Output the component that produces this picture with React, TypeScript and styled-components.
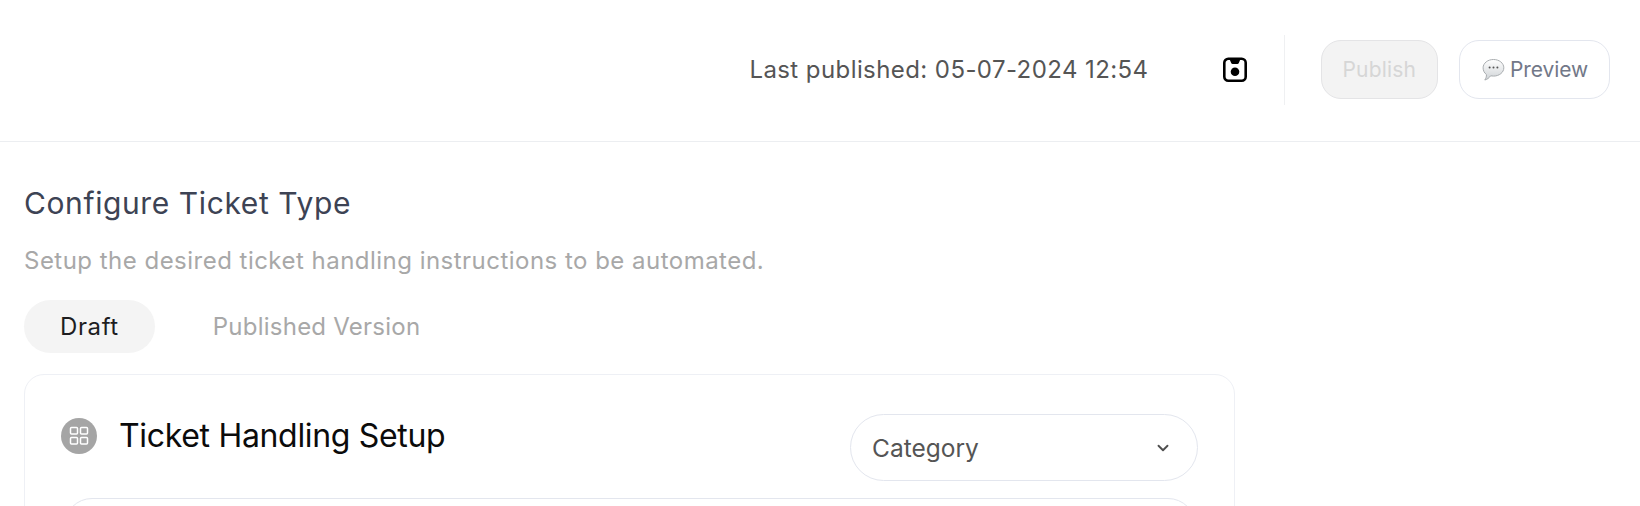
import styled, { createGlobalStyle } from "styled-components";
import { ChevronDown } from "lucide-react";

const GlobalStyle = createGlobalStyle`
  html, body {
    margin: 0;
    height: 506px;
    overflow: hidden;
    background: #ffffff;
    font-family: "Inter", "Noto Sans", sans-serif;
  }
  * {
    box-sizing: border-box;
  }
`;

const SaveIcon = () => (
  <svg width="26" height="26" viewBox="0 0 26 26" fill="none">
    <rect x="2.3" y="1.8" width="21.4" height="22" rx="4" stroke="#000" strokeWidth="2.6" />
    <path d="M7.5 2h11l-1.8 4.2a1.5 1.5 0 0 1-1.4.8h-4.6a1.5 1.5 0 0 1-1.4-.8z" fill="#000" />
    <circle cx="13" cy="14.8" r="4.3" fill="#000" />
  </svg>
);

const BubbleIcon = () => (
  <svg width="24" height="24" viewBox="0 0 24 24">
    <defs>
      <linearGradient id="bubble" x1="0" y1="0" x2="0" y2="1">
        <stop offset="0" stopColor="#ffffff" />
        <stop offset="1" stopColor="#cfd3d6" />
      </linearGradient>
    </defs>
    <path
      d="M12.5 1.5c5.8 0 10.3 3.7 10.3 8.3s-4.5 8.3-10.3 8.3c-1 0-2-.1-2.9-.3-1.3 1.9-3.3 3.7-5.8 4.2 1.1-1.6 1.7-3.3 1.7-5.4-2.2-1.6-3.4-4-3.4-6.8 0-4.6 4.6-8.3 10.4-8.3z"
      fill="url(#bubble)"
      stroke="#a9adb0"
      strokeWidth="1"
    />
    <circle cx="8.6" cy="9.6" r="1" fill="#555" />
    <circle cx="12.5" cy="9.6" r="1" fill="#555" />
    <circle cx="16.4" cy="9.6" r="1" fill="#555" />
  </svg>
);

const GridIcon = () => (
  <svg width="20" height="20" viewBox="0 0 20 20" fill="none" stroke="#fff" strokeWidth="1.5">
    <rect x="1.5" y="1.5" width="7" height="6.5" rx="1" />
    <rect x="11.5" y="1.5" width="7" height="6.5" rx="1" />
    <rect x="1.5" y="11.5" width="7" height="6.5" rx="1" />
    <rect x="11.5" y="11.5" width="7" height="6.5" rx="1" />
  </svg>
);

const Header = styled.header`
  height: 142px;
  display: flex;
  align-items: center;
  justify-content: flex-end;
  padding: 0 30px 2px 0;
  border-bottom: 1px solid #eceef1;
`;

const LastPublished = styled.span`
  font-size: 24px;
  color: #555555;
  margin-right: 73px;
  letter-spacing: 0.42px;
`;

const SaveButton = styled.span`
  display: flex;
  margin-right: 36px;
`;

const Divider = styled.div`
  width: 1px;
  height: 70px;
  background: #eff0f2;
  margin-right: 36px;
`;

const HeaderButton = styled.button<{ $disabled?: boolean }>`
  height: 59px;
  display: flex;
  align-items: center;
  gap: 5px;
  padding: 0 21px;
  border-radius: 20px;
  font-family: inherit;
  font-size: 21px;
  background: ${(p) => (p.$disabled ? "#f3f3f3" : "#ffffff")};
  color: ${(p) => (p.$disabled ? "#d6d6d6" : "#727888")};
  border: 1px solid ${(p) => (p.$disabled ? "#e4e4e6" : "#e3e6ee")};
  margin-left: ${(p) => (p.$disabled ? "0" : "21px")};
  letter-spacing: ${(p) => (p.$disabled ? "0.15px" : "-0.1px")};
`;

const Main = styled.main`
  padding: 0 24px;
`;

const Title = styled.h1`
  margin: 42px 0 0;
  font-size: 30px;
  line-height: 38px;
  font-weight: 400;
  color: #3d4354;
  letter-spacing: 0.6px;
`;

const Subtitle = styled.p`
  margin: 23px 0 0;
  font-size: 24px;
  line-height: 32px;
  color: #a8a8a8;
  letter-spacing: 0.48px;
`;

const Tabs = styled.div`
  display: flex;
  align-items: center;
  margin-top: 23px;
`;

const Tab = styled.div<{ $active?: boolean }>`
  height: 53px;
  display: flex;
  align-items: center;
  padding: 0 36px;
  border-radius: 27px;
  font-size: 24px;
  background: ${(p) => (p.$active ? "#f4f4f4" : "transparent")};
  color: ${(p) => (p.$active ? "#1d1d1f" : "#a8a8a8")};
  margin-left: ${(p) => (p.$active ? "0" : "22px")};
  letter-spacing: ${(p) => (p.$active ? "0.6px" : "0.24px")};
`;

const Card = styled.section`
  width: 1211px;
  height: 200px;
  margin-top: 21px;
  padding: 39px 36px 0;
  border: 1px solid #eef0f5;
  border-radius: 20px;
`;

const CardHeader = styled.div`
  display: flex;
  justify-content: space-between;
  align-items: flex-start;
`;

const CardTitleRow = styled.div`
  display: flex;
  align-items: center;
  gap: 22px;
  margin-top: 4px;
`;

const IconCircle = styled.span`
  width: 36px;
  height: 36px;
  border-radius: 50%;
  background: #a5a5a5;
  display: flex;
  align-items: center;
  justify-content: center;
`;

const CardTitle = styled.h2`
  margin: 0;
  font-size: 32px;
  line-height: 36px;
  font-weight: 400;
  color: #0b0b0b;
  letter-spacing: -0.32px;
`;

const Select = styled.div`
  width: 348px;
  height: 67px;
  display: flex;
  align-items: center;
  justify-content: space-between;
  padding: 0 25px 0 21px;
  border: 1px solid #e3e6ee;
  border-radius: 34px;
  font-size: 24.5px;
  color: #555555;
`;

const InnerCard = styled.div`
  height: 120px;
  margin-top: 17px;
  margin-left: 3px;
  margin-right: 2px;
  border: 1px solid #e3e6ee;
  border-radius: 28px;
`;

export default function App() {
  return (
    <>
      <GlobalStyle />
      <Header>
        <LastPublished>Last published: 05-07-2024 12:54</LastPublished>
        <SaveButton>
          <SaveIcon />
        </SaveButton>
        <Divider />
        <HeaderButton $disabled>Publish</HeaderButton>
        <HeaderButton>
          <BubbleIcon />
          Preview
        </HeaderButton>
      </Header>
      <Main>
        <Title>Configure Ticket Type</Title>
        <Subtitle>Setup the desired ticket handling instructions to be automated.</Subtitle>
        <Tabs>
          <Tab $active>Draft</Tab>
          <Tab>Published Version</Tab>
        </Tabs>
        <Card>
          <CardHeader>
            <CardTitleRow>
              <IconCircle>
                <GridIcon />
              </IconCircle>
              <CardTitle>Ticket Handling Setup</CardTitle>
            </CardTitleRow>
            <Select>
              Category
              <ChevronDown size={18} color="#4f4f4f" strokeWidth={2.5} />
            </Select>
          </CardHeader>
          <InnerCard />
        </Card>
      </Main>
    </>
  );
}
